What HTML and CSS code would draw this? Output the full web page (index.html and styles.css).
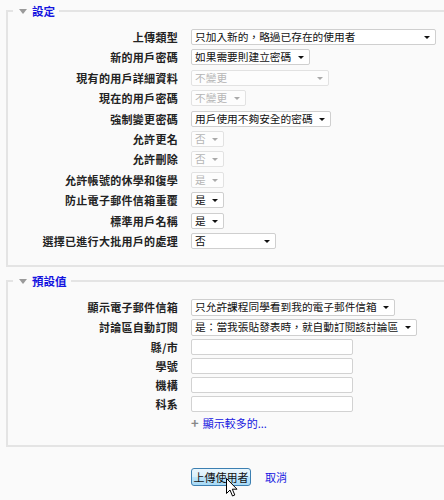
FILE: index.html
```html
<!DOCTYPE html>
<html lang="zh-Hant">
<head>
    <meta charset="UTF-8">
    <title>上傳使用者</title>
    <link rel="stylesheet" href="styles.css">
</head>
<body>
    <div class="page">
        <fieldset class="group">
            <legend><span class="toggle"></span>設定</legend>
            <div class="form">
                <label class="label">上傳類型</label>
                <span class="pick w-type"><select><option>只加入新的，略過已存在的使用者</option></select></span>

                <label class="label">新的用戶密碼</label>
                <span class="pick"><select><option>如果需要則建立密碼</option></select></span>

                <label class="label">現有的用戶詳細資料</label>
                <span class="pick off w-detail"><select disabled><option>不變更</option></select></span>

                <label class="label">現在的用戶密碼</label>
                <span class="pick off"><select disabled><option>不變更</option></select></span>

                <label class="label">強制變更密碼</label>
                <span class="pick"><select><option>用戶使用不夠安全的密碼</option></select></span>

                <label class="label">允許更名</label>
                <span class="pick off"><select disabled><option>否</option></select></span>

                <label class="label">允許刪除</label>
                <span class="pick off"><select disabled><option>否</option></select></span>

                <label class="label">允許帳號的休學和復學</label>
                <span class="pick off"><select disabled><option>是</option></select></span>

                <label class="label">防止電子郵件信箱重覆</label>
                <span class="pick"><select><option>是</option></select></span>

                <label class="label">標準用戶名稱</label>
                <span class="pick"><select><option>是</option></select></span>

                <label class="label">選擇已進行大批用戶的處理</label>
                <span class="pick w-bulk"><select><option>否</option></select></span>
            </div>
        </fieldset>

        <fieldset class="group">
            <legend><span class="toggle"></span>預設值</legend>
            <div class="form form-tight">
                <label class="label">顯示電子郵件信箱</label>
                <span class="pick tall"><select><option>只允許課程同學看到我的電子郵件信箱</option></select></span>

                <label class="label">討論區自動訂閱</label>
                <span class="pick tall"><select><option>是：當我張貼發表時，就自動訂閱該討論區</option></select></span>

                <label class="label">縣/市</label>
                <input class="field" type="text">

                <label class="label">學號</label>
                <input class="field" type="text">

                <label class="label">機構</label>
                <input class="field" type="text">

                <label class="label">科系</label>
                <input class="field" type="text">

                <span></span>
                <a class="more" href="#"><span class="plus">+</span>顯示較多的...</a>
            </div>
        </fieldset>

        <div class="actions">
            <button class="btn">上傳使用者</button>
            <a class="cancel" href="#">取消</a>
            <svg class="cursor" width="13" height="20" viewBox="0 0 13 20">
                <path d="M0.5 0.5 L0.5 15.5 L4 12 L6.5 18 L8.8 17 L6.3 11.2 L11 11.2 Z" fill="#fff" stroke="#000" stroke-width="1"/>
            </svg>
        </div>
    </div>
</body>
</html>
```

FILE: styles.css
```css
* {
    box-sizing: border-box;
}

body {
    margin: 0;
    background: #fafafa;
    font-family: "Noto Sans CJK TC", "Liberation Sans", sans-serif;
    font-size: 11px;
    color: #222;
}

.page {
    overflow: hidden;
    padding-top: 3px;
    height: 500px;
    position: relative;
}

.group {
    margin: 0 -30px 0 6px;
    padding: 10px 0 16px 0;
    border: 2px solid #e4e4e4;
    min-width: 0;
}

.group + .group {
    margin-top: 6px;
}

.group legend {
    margin-left: 5px;
    padding: 0 4px 0 6px;
    height: 16px;
    line-height: 16px;
    color: #1414e0;
    font-weight: bold;
    font-size: 11.5px;
}

.toggle {
    display: inline-block;
    width: 0;
    height: 0;
    border-left: 4px solid transparent;
    border-right: 4px solid transparent;
    border-top: 5px solid #9a9a9a;
    margin-right: 5px;
    vertical-align: 2px;
}

.form {
    display: grid;
    grid-template-columns: 170px max-content;
    column-gap: 13px;
    row-gap: 4.4px;
    align-items: center;
}

.form-tight {
    row-gap: 3px;
}

.label {
    text-align: right;
    font-weight: bold;
    letter-spacing: 0.3px;
    color: #222;
    line-height: 16px;
}

.pick {
    position: relative;
    display: inline-block;
    justify-self: start;
}

.pick select {
    appearance: none;
    -webkit-appearance: none;
    font-family: inherit;
    font-size: 10.7px;
    color: #111;
    height: 16px;
    line-height: 14px;
    padding: 0 17px 0 3px;
    border: 1px solid #cfcfcf;
    border-radius: 2px;
    background: #fff;
    display: block;
}

.pick::after {
    content: "";
    position: absolute;
    right: 6px;
    top: 7px;
    border-left: 3px solid transparent;
    border-right: 3px solid transparent;
    border-top: 3px solid #111;
    pointer-events: none;
}

.pick.off select {
    color: #999;
    border-color: #d8d8d8;
}

.pick.off::after {
    border-top-color: #aaa;
}

.pick.tall select {
    height: 17px;
}

.w-type select {
    width: 245px;
}

.w-detail select {
    width: 138px;
}

.w-bulk select {
    width: 85px;
}

.field {
    width: 162px;
    height: 16px;
    border: 1px solid #d2d2d2;
    border-radius: 2px;
    background: #fff;
    margin: 0;
}

.more {
    color: #1414e0;
    text-decoration: none;
    line-height: 12px;
    margin-top: 2px;
    justify-self: start;
}

.plus {
    color: #888;
    font-weight: bold;
    font-size: 13px;
    margin-right: 4px;
}

.actions {
    margin-top: 21px;
    padding-left: 191px;
    display: flex;
    align-items: center;
    gap: 14px;
    position: relative;
}

.btn {
    font: inherit;
    color: #111;
    height: 18px;
    width: 60px;
    padding: 0;
    border: 1px solid #3c7fb1;
    border-radius: 3px;
    background: linear-gradient(#eaf6fd 0%, #d9f0fc 50%, #bee6fd 50%, #a7d9f5 100%);
}

.cancel {
    color: #1414e0;
    text-decoration: none;
}

.cursor {
    position: absolute;
    left: 226px;
    top: 10px;
}
```
